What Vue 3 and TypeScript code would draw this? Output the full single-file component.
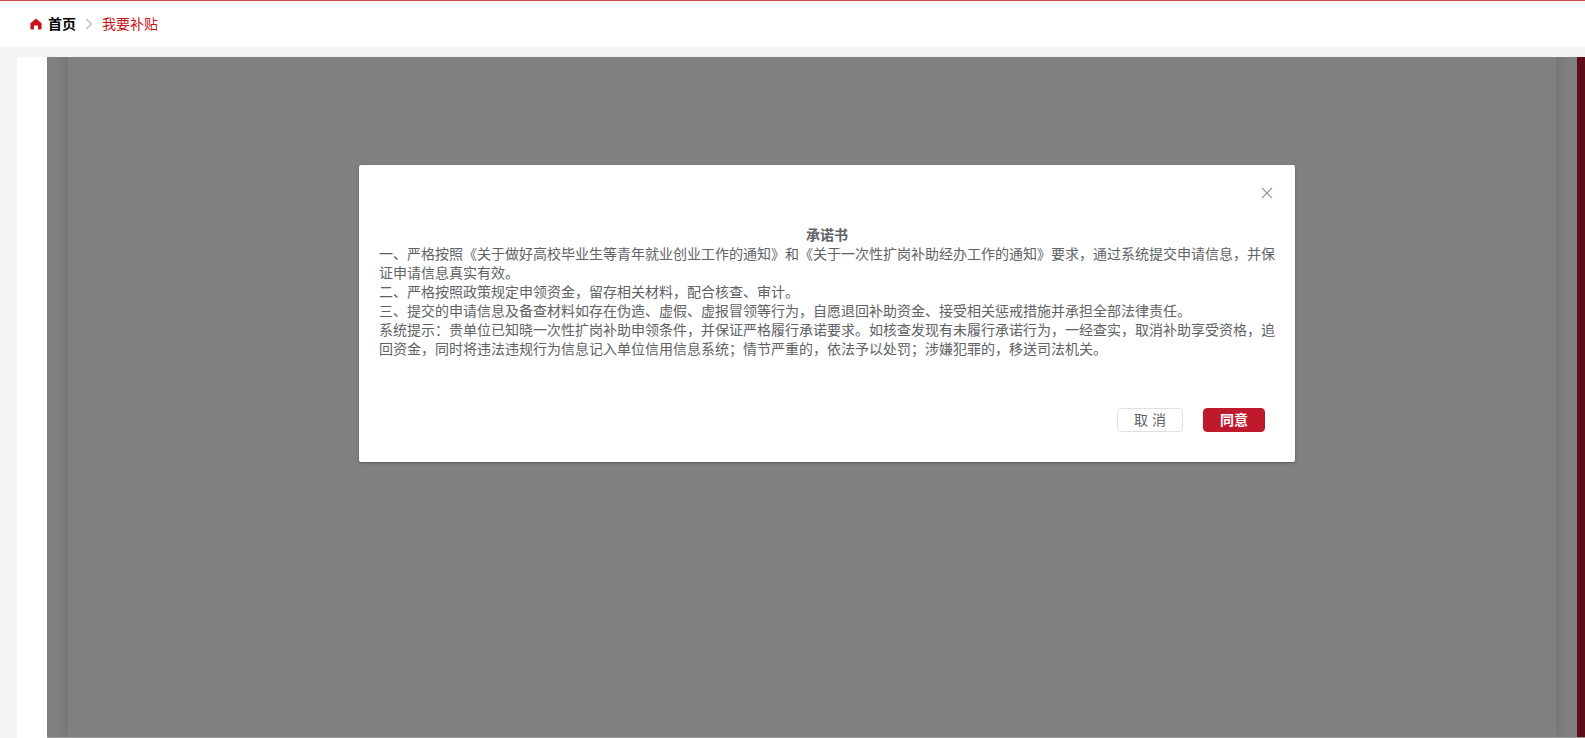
<script setup lang="ts">
import { ref } from 'vue'

const open = ref(true)
const paragraphs: string[] = [
  '一、严格按照《关于做好高校毕业生等青年就业创业工作的通知》和《关于一次性扩岗补助经办工作的通知》要求，通过系统提交申请信息，并保证申请信息真实有效。',
  '二、严格按照政策规定申领资金，留存相关材料，配合核查、审计。',
  '三、提交的申请信息及备查材料如存在伪造、虚假、虚报冒领等行为，自愿退回补助资金、接受相关惩戒措施并承担全部法律责任。',
  '系统提示：贵单位已知晓一次性扩岗补助申领条件，并保证严格履行承诺要求。如核查发现有未履行承诺行为，一经查实，取消补助享受资格，追回资金，同时将违法违规行为信息记入单位信用信息系统；情节严重的，依法予以处罚；涉嫌犯罪的，移送司法机关。',
]
</script>

<template>
  <div class="page">
    <nav class="crumbs" aria-label="面包屑">
      <svg class="home" viewBox="0 0 12 12" aria-hidden="true">
        <path d="M6 .4 11.6 5.2V10.2Q11.6 11.4 10.4 11.4H8V7.6H4V11.4H1.6Q.4 11.4.4 10.2V5.2Z" />
      </svg>
      <a class="root" href="#">首页</a>
      <svg class="arrow" viewBox="0 0 8 12" aria-hidden="true">
        <path d="M1.5 1 6.5 6 1.5 11" />
      </svg>
      <a class="current" href="#" aria-current="page">我要补贴</a>
    </nav>
    <main class="panel">
      <div class="stage">
        <div class="sheet"></div>
        <div class="edge"></div>
        <div v-if="open" class="overlay">
          <section class="dialog" role="dialog" aria-modal="true" aria-labelledby="dialog-title">
            <header class="dialog-head">
              <button class="close" type="button" aria-label="关闭" @click="open = false">
                <svg viewBox="0 0 12 12" aria-hidden="true"><path d="M1 1 11 11M11 1 1 11" /></svg>
              </button>
            </header>
            <div class="dialog-body">
              <h1 id="dialog-title">承诺书</h1>
              <p v-for="text in paragraphs" :key="text">{{ text }}</p>
            </div>
            <footer class="dialog-foot">
              <button class="btn" type="button" @click="open = false">取 消</button>
              <button class="btn primary" type="button" @click="open = false">同意</button>
            </footer>
          </section>
        </div>
      </div>
    </main>
  </div>
</template>

<style>
body {
  margin: 0;
}
</style>

<style scoped>
.page {
  box-sizing: border-box;
  display: flex;
  flex-direction: column;
  min-height: 100vh;
  overflow: hidden;
  border-top: 1px solid #d04848;
  background: #f4f4f4;
  color: #606266;
  font: 14px/19px "Liberation Sans", "Noto Sans CJK SC", sans-serif;
}
.crumbs {
  display: flex;
  align-items: center;
  height: 46px;
  padding-left: 30px;
  background: #fff;
}
.home {
  width: 12px;
  height: 12px;
  margin-right: 6px;
  fill: #c7141a;
}
.crumbs a {
  text-decoration: none;
}
.root {
  color: #000;
  font-weight: 700;
}
.arrow {
  width: 8px;
  height: 12px;
  margin: 0 9px;
  fill: none;
  stroke: #b4b8c2;
  stroke-width: 1.2;
}
.current {
  color: #c7141a;
}
.panel {
  display: flex;
  flex: 1;
  margin: 10px 0 0 17px;
  padding-left: 30px;
  border-radius: 4px 0 0 0;
  background: #fff;
}
/* The framed page is wider than the visible area and runs off the right side. */
.stage {
  display: grid;
  grid-template-columns: 21px 1fr 21px 30px;
  flex: 1;
  margin-right: -22px;
  overflow: hidden;
  border-bottom: 1px solid #a0a0a0;
  background: #808080;
}
.sheet {
  grid-column: 2;
  grid-row: 1;
  margin: -12px 0;
  box-shadow: 0 0 12px rgba(0, 0, 0, 0.14);
  background: #808080;
}
.edge {
  grid-column: 4;
  grid-row: 1;
  background: #5f0d16;
}
.overlay {
  grid-column: 1 / -1;
  grid-row: 1;
  z-index: 1;
}
.dialog {
  box-sizing: border-box;
  width: 60%;
  margin: 108px auto 48px;
  border-radius: 2px;
  background: #fff;
  box-shadow: 0 1px 3px rgba(0, 0, 0, 0.3);
}
.dialog-head {
  display: flex;
  justify-content: flex-end;
  padding: 20px 20px 10px;
}
.close {
  display: flex;
  align-items: center;
  justify-content: center;
  width: 16px;
  height: 16px;
  padding: 0;
  border: 0;
  background: none;
  cursor: pointer;
}
.close svg {
  width: 12px;
  height: 12px;
  fill: none;
  stroke: #909399;
  stroke-width: 1.1;
}
.dialog-body {
  padding: 15px 20px 30px;
}
h1,
p {
  margin: 0;
  font-size: 14px;
}
h1 {
  text-align: center;
}
.dialog-foot {
  display: flex;
  justify-content: flex-end;
  gap: 20px;
  padding: 19px 30px 30px;
}
.btn {
  box-sizing: border-box;
  height: 24px;
  padding: 0 16px;
  border: 1px solid #dcdfe6;
  border-radius: 4px;
  background: #fff;
  color: #606266;
  font: inherit;
  cursor: pointer;
}
.primary {
  border-color: #bf1a2c;
  background: #bf1a2c;
  color: #fff;
  font-weight: 700;
}
</style>
